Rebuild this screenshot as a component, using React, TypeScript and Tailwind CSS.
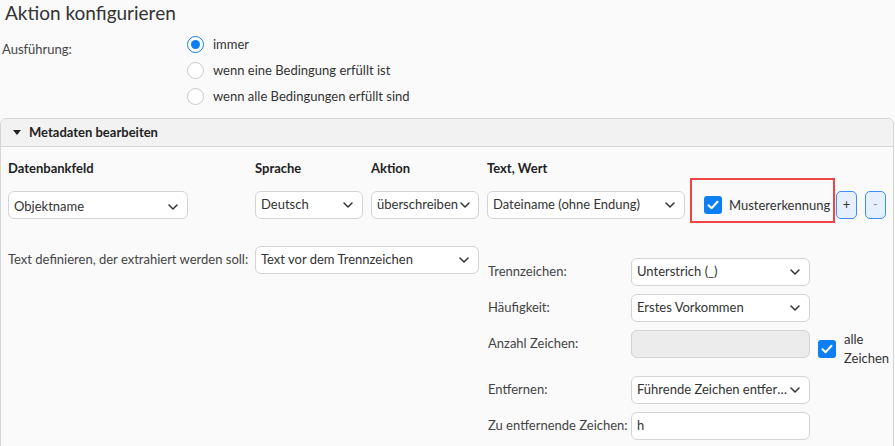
import React from "react";

const Chevron = () => (
  <svg width="10" height="6" viewBox="0 0 10 6" fill="none" className="shrink-0">
    <path d="M1 1l4 4 4-4" stroke="#333" strokeWidth="1.5" strokeLinecap="round" strokeLinejoin="round" />
  </svg>
);

const Check = () => (
  <div className="flex h-[18px] w-[18px] shrink-0 items-center justify-center rounded-[3px] bg-[#0d7ff2]">
    <svg width="12" height="10" viewBox="0 0 12 10" fill="none">
      <path d="M1.5 5.2l3 3 6-6.4" stroke="#fff" strokeWidth="2" strokeLinecap="round" strokeLinejoin="round" />
    </svg>
  </div>
);

function Select({ value, className, noTrunc }: { value: string; className: string; noTrunc?: boolean }) {
  return (
    <div
      className={`flex h-[28px] items-center justify-between gap-[2px] rounded-[6px] border border-[#d4d4d4] bg-white pl-[5px] pr-[9px] text-[#333] ${className}`}
    >
      <span className={noTrunc ? "whitespace-nowrap" : "truncate whitespace-nowrap"}>{value}</span>
      <Chevron />
    </div>
  );
}

function Radio({ checked, label }: { checked?: boolean; label: string }) {
  return (
    <div className="flex h-[26px] items-center gap-[9px]">
      {checked ? (
        <div className="flex h-[17px] w-[17px] items-center justify-center rounded-full border-[1.5px] border-[#0d7ff2] bg-white">
          <div className="h-[9px] w-[9px] rounded-full bg-[#0d7ff2]" />
        </div>
      ) : (
        <div className="h-[17px] w-[17px] rounded-full border border-[#c9c9c9] bg-white" />
      )}
      <span className="leading-[20px] text-[#333]">{label}</span>
    </div>
  );
}

function Row({ label, children, start }: { label: string; children: React.ReactNode; start?: boolean }) {
  return (
    <div className={`flex ${start ? "items-start" : "items-center"}`}>
      <div className="flex h-[28px] w-[143px] shrink-0 items-center whitespace-nowrap text-[#444]">{label}</div>
      {children}
    </div>
  );
}

export default function App() {
  return (
    <div className="h-[446px] w-[895px] overflow-hidden bg-[#fafafa] font-['Lato',sans-serif] text-[13px] text-[#333]">
      <h1 className="pl-[5px] text-[19px] leading-[26px] text-[#333]">Aktion konfigurieren</h1>

      <div className="mt-[5px] flex">
        <div className="w-[187px] pl-[2px] pt-[8px] leading-[20px] text-[#444]">Ausführung:</div>
        <div className="flex flex-col">
          <Radio checked label="immer" />
          <Radio label="wenn eine Bedingung erfüllt ist" />
          <Radio label="wenn alle Bedingungen erfüllt sind" />
        </div>
      </div>

      <div className="mt-[9px] w-[894px] rounded-t-[6px] border border-[#d6d6d6] bg-[#fafafa]">
        <div className="flex h-[28px] items-center gap-[8px] rounded-t-[6px] border-b border-[#d6d6d6] bg-[#f2f2f2] pl-[12px]">
          <svg width="8" height="5" viewBox="0 0 8 5">
            <path d="M0 0h8L4 5z" fill="#222" />
          </svg>
          <span className="font-bold text-[#222]">Metadaten bearbeiten</span>
        </div>

        <div className="pb-[20px] pl-[7px] pt-[12px]">
          <div className="flex h-[19px] items-center font-bold leading-[19px] text-[#222]">
            <div className="w-[247px]">Datenbankfeld</div>
            <div className="w-[116px]">Sprache</div>
            <div className="w-[116px]">Aktion</div>
            <div className="w-[203px]">Text, Wert</div>
          </div>

          <div className="flex items-start">
            <div className="w-[247px] pt-[13px]">
              <Select value="Objektname" className="w-[180px] pt-[3px]" />
            </div>
            <div className="w-[116px] pt-[13px]">
              <Select value="Deutsch" className="w-[108px]" />
            </div>
            <div className="w-[116px] pt-[13px]">
              <Select value="überschreiben" className="w-[108px] pr-[7px]" noTrunc />
            </div>
            <div className="w-[203px] pt-[13px]">
              <Select value="Dateiname (ohne Endung)" className="w-[198px]" />
            </div>
            <div className="flex h-[45px] w-[145px] items-start gap-[7px] border-2 border-[#f04444] pl-[12px] pt-[16px]">
              <Check />
              <span className="whitespace-nowrap leading-[18px] text-[#333]">Mustererkennung</span>
            </div>
            <div className="ml-[1px] mt-[13px] flex h-[28px] w-[21px] items-center justify-center rounded-[5px] border border-[#3d8ef5] bg-[#e6f0fd] text-[13px] text-[#333]">
              +
            </div>
            <div className="ml-[8px] mt-[13px] flex h-[28px] w-[21px] items-center justify-center rounded-[5px] border border-[#3d8ef5] bg-[#e6f0fd] text-[13px] text-[#999]">
              -
            </div>
          </div>

          <div className="mt-[23px] flex items-start">
            <div className="flex w-[472px] items-center">
              <div className="w-[247px] whitespace-nowrap text-[#444]">Text definieren, der extrahiert werden soll:</div>
              <Select value="Text vor dem Trennzeichen" className="w-[224px]" />
            </div>
            <div className="ml-[8px] flex flex-col gap-[8px] pt-[12px]">
              <Row label="Trennzeichen:">
                <Select value="Unterstrich (_)" className="w-[179px]" />
              </Row>
              <Row label="Häufigkeit:">
                <Select value="Erstes Vorkommen" className="w-[179px]" />
              </Row>
              <Row label="Anzahl Zeichen:" start>
                <div className="h-[28px] w-[179px] rounded-[6px] border border-[#d4d4d4] bg-[#ececec]" />
                <div className="ml-[8px] flex items-center gap-[8px]">
                  <Check />
                  <div className="leading-[19px] text-[#333]">
                    alle
                    <br />
                    Zeichen
                  </div>
                </div>
              </Row>
              <Row label="Entfernen:">
                <Select value="Führende Zeichen entfernen" className="w-[179px] pr-[8px]" />
              </Row>
              <Row label="Zu entfernende Zeichen:">
                <div className="flex h-[28px] w-[179px] items-center rounded-[6px] border border-[#d4d4d4] bg-white pl-[5px] text-[#333]">
                  h
                </div>
              </Row>
            </div>
          </div>
        </div>
      </div>
    </div>
  );
}
